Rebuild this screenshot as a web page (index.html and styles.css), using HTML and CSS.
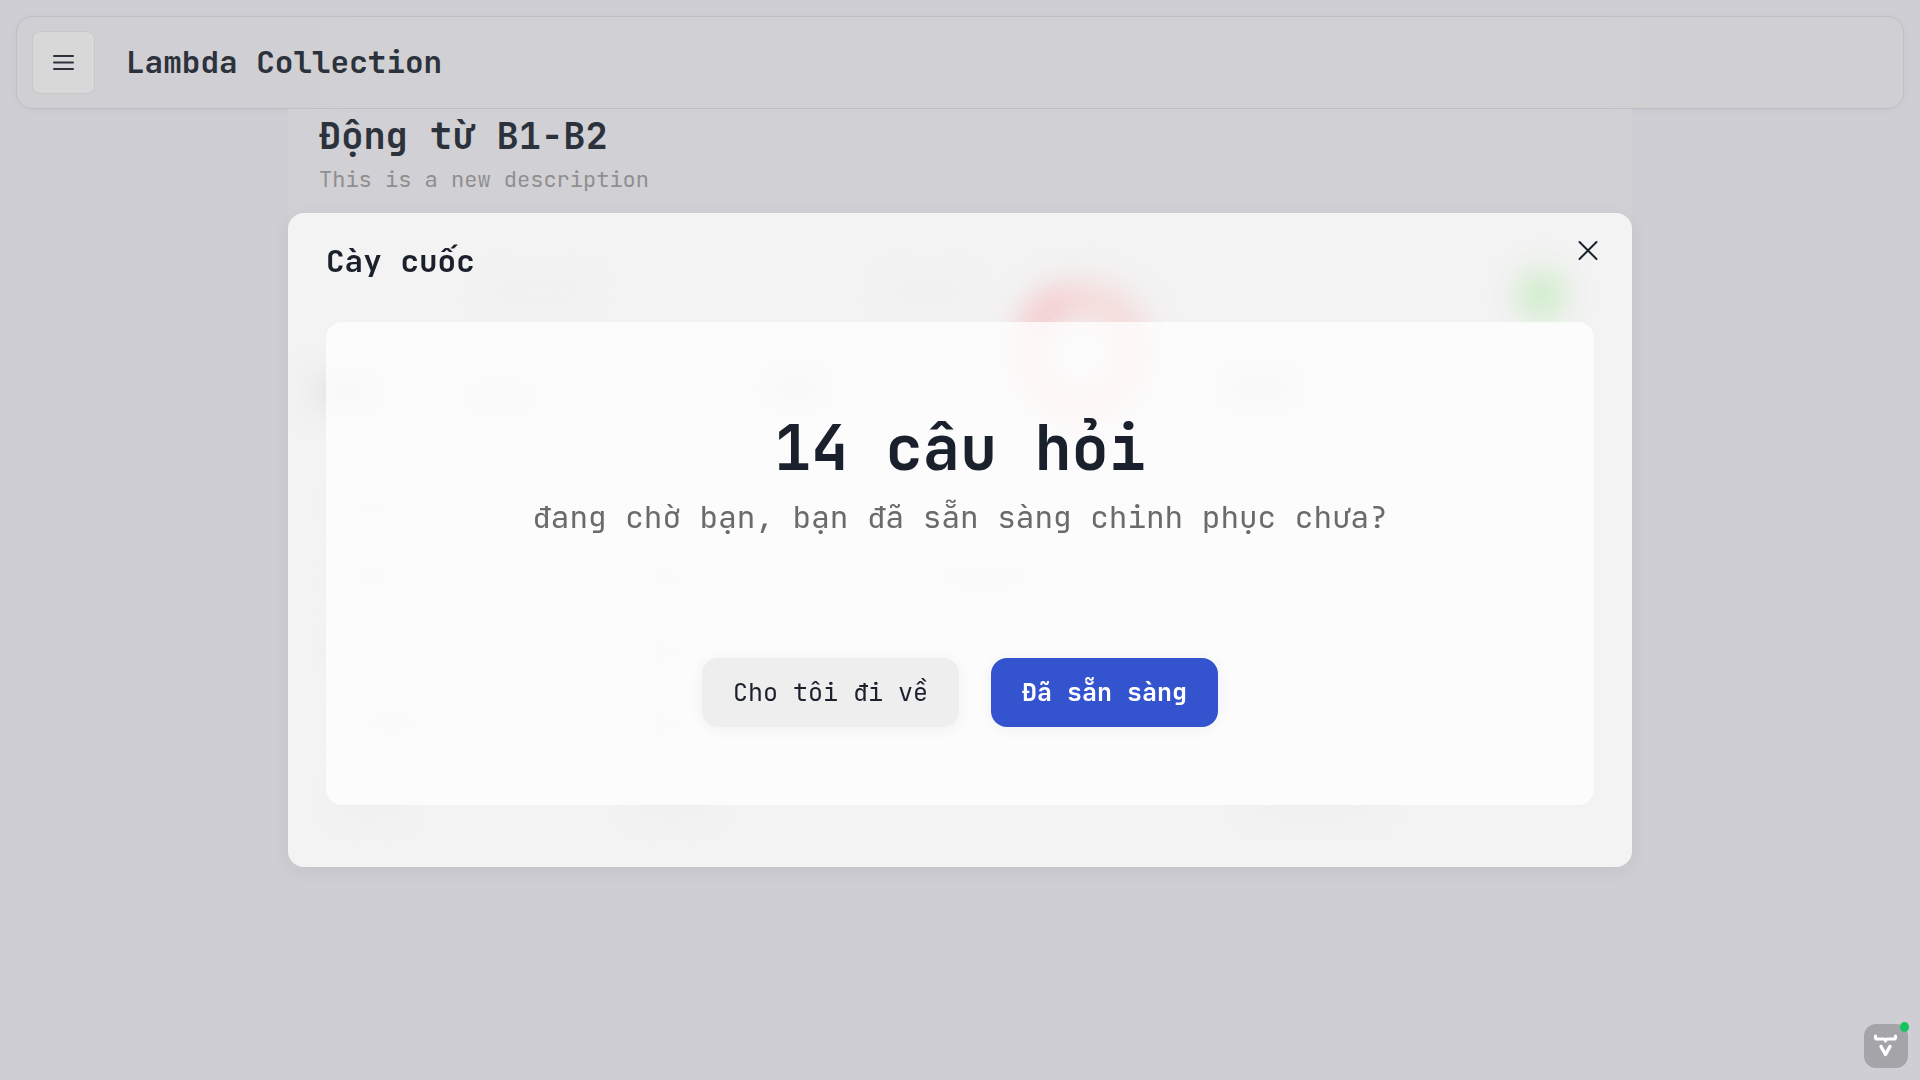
FILE: index.html
```html
<!DOCTYPE html>
<html lang="vi">
<head>
<meta charset="utf-8">
<meta name="viewport" content="width=device-width, initial-scale=1">
<title>Lambda Collection</title>
<link rel="stylesheet" href="styles.css">
</head>
<body>
<div class="page">
  <header class="topbar">
    <button class="menu-button" type="button" aria-label="Menu">
      <svg width="24" height="24" viewBox="0 0 24 24" fill="none" stroke="currentColor" stroke-width="2" stroke-linecap="round"><path d="M2 5h19M2 11.500h19M2 18h19"/></svg>
    </button>
    <span class="brand">Lambda Collection</span>
  </header>
  <main class="deck">
    <h1 class="deck-title">Động từ B1-B2</h1>
    <p class="deck-description">This is a new description</p>
  </main>
</div>

<div class="overlay">
  <section class="dialog" role="dialog" aria-modal="true" aria-labelledby="dialog-title">
    <svg class="glow" viewBox="0 0 1344 654" aria-hidden="true">
      <defs>
        <filter id="soft" x="-100%" y="-100%" width="300%" height="300%" color-interpolation-filters="sRGB"><feGaussianBlur stdDeviation="15"/></filter>
      </defs>
      <g filter="url(#soft)">
        <circle cx="793" cy="139" r="53" fill="none" stroke="#f5d8d8" stroke-width="34"/>
        <path d="M744 118A54 54 0 0 1 780 86" fill="none" stroke="#f4c8cb" stroke-width="32"/>
        <circle cx="1253" cy="82" r="25" fill="#cfecc9"/>
        <g fill="#e2e2e2">
          <rect x="28" y="162" width="64" height="34"/>
          <rect x="180" y="174" width="64" height="22"/>
          <rect x="476" y="156" width="62" height="36"/>
          <rect x="934" y="156" width="76" height="36"/>
        </g>
        <g fill="#e8e8e8">
          <rect x="56" y="286" width="60" height="16"/>
          <rect x="56" y="356" width="60" height="16"/>
          <rect x="350" y="356" width="56" height="16"/>
          <rect x="636" y="356" width="120" height="16"/>
          <rect x="52" y="430" width="36" height="16"/>
          <rect x="350" y="430" width="56" height="16"/>
          <rect x="62" y="502" width="80" height="16"/>
          <rect x="350" y="502" width="56" height="16"/>
        </g>
        <g fill="#ededed">
          <rect x="52" y="578" width="60" height="18"/>
          <rect x="350" y="578" width="70" height="18"/>
          <rect x="960" y="580" width="130" height="14"/>
          <rect x="200" y="72" width="100" height="10"/>
          <rect x="600" y="72" width="80" height="10"/>
        </g>
      </g>
    </svg>
    <header class="dialog-header">
      <h2 class="dialog-title" id="dialog-title">Cày cuốc</h2>
      <button class="close-button" type="button" aria-label="Đóng">
        <svg width="24" height="24" viewBox="0 0 24 24" fill="none" stroke="currentColor" stroke-width="2" stroke-linecap="round"><path d="M3.500 3l17 17M20.500 3l-17 17"/></svg>
      </button>
    </header>
    <div class="prompt">
      <p class="prompt-count">14 câu hỏi</p>
      <p class="prompt-text">đang chờ bạn, bạn đã sẵn sàng chinh phục chưa?</p>
      <div class="actions">
        <button class="button" type="button">Cho tôi đi về</button>
        <button class="button button-primary" type="button">Đã sẵn sàng</button>
      </div>
    </div>
  </section>
</div>

<button class="devtools" type="button" aria-label="Dev tools">
  <svg width="44" height="44" viewBox="0 0 44 44" fill="none" stroke="#fff" stroke-linecap="round" stroke-linejoin="round"><path stroke-width="3.200" d="M11.500 12v1.500q0 1.500 1.500 1.500h6.500q2 0 2 2 0-2 2-2H30q1.500 0 1.500-1.500V12"/><path stroke-width="3.400" d="M17 22.500l4.500 8 4.500-8"/></svg>
  <span class="status-dot"></span>
</button>
</body>
</html>
```

FILE: styles.css
```css
* {
  box-sizing: border-box;
}

body {
  margin: 0;
  min-height: 100vh;
  background: #cfced4;
  color: #1a202c;
  font-family: "JetBrains Mono", "DejaVu Sans Mono", monospace;
}

h1, h2, p {
  margin: 0;
}

button {
  border: 0;
  padding: 0;
  background: none;
  color: inherit;
  font: inherit;
  cursor: pointer;
}

svg {
  display: block;
}

.page {
  min-height: 100vh;
  padding-top: 16px;
  color: #2c323c;
}

.topbar {
  display: flex;
  align-items: center;
  gap: 31px;
  height: 93px;
  margin: 0 16px;
  padding: 0 15px;
  border: 1px solid #bfbfc1;
  border-radius: 16px;
  background: #d0cfd3;
  background: linear-gradient(90deg, #d0cfd3 14%, #d1d0d2 18%, #d1d0d2 84%, #d0cfd3 88%);
  box-shadow: 0 1px 8px rgba(0, 0, 0, 0.04);
}

.menu-button {
  display: grid;
  place-items: center;
  width: 63px;
  height: 63px;
  border: 1px solid #c8c8c8;
  border-radius: 8px;
  background: #d8d8d8;
}

.brand {
  padding-bottom: 2px;
  font-size: 31px;
  font-weight: 700;
  line-height: 40px;
}

.deck {
  width: 70%;
  min-height: 758px;
  margin: 0 auto;
  padding: 0 31px;
  background: #d1d0d4;
  background: linear-gradient(#d1d0d4 100px, #cfced4 700px);
}

.deck-title {
  padding-top: 3px;
  font-size: 37px;
  font-weight: 600;
  line-height: 48px;
}

.deck-description {
  color: #8f8f90;
  font-size: 22px;
  line-height: 40px;
}

.overlay {
  position: fixed;
  inset: 0;
  display: flex;
  align-items: center;
  justify-content: center;
}

.dialog {
  position: relative;
  width: 70%;
  padding: 26px 38px 62px;
  border-radius: 16px;
  background: #f3f3f3;
  box-shadow: 0 4px 20px rgba(0, 0, 0, 0.06);
}

.glow {
  position: absolute;
  inset: 0;
  width: 100%;
  height: 100%;
  border-radius: 16px;
  overflow: hidden;
  pointer-events: none;
}

.dialog-header {
  position: relative;
  display: flex;
  justify-content: space-between;
  align-items: flex-start;
  height: 83px;
}

.dialog-title {
  font-size: 31px;
  font-weight: 600;
  line-height: 44px;
}

.close-button {
  display: grid;
  place-items: center;
  width: 24px;
  height: 24px;
  margin-right: -6px;
}

.prompt {
  position: relative;
  padding: 86px 32px 78px;
  border-radius: 16px;
  background: rgba(255, 255, 255, 0.76);
  text-align: center;
}

.prompt-count {
  font-size: 62px;
  font-weight: 700;
  line-height: 80px;
}

.prompt-text {
  margin-top: 9px;
  color: #6b6b6b;
  font-size: 31px;
  line-height: 40px;
}

.actions {
  display: flex;
  justify-content: center;
  gap: 32px;
  margin-top: 121px;
}

.button {
  height: 69px;
  padding: 0 31px 2px;
  border-radius: 16px;
  background: #eeeeee;
  box-shadow: 0 2px 16px rgba(0, 0, 0, 0.05);
  font-size: 25px;
}

.button-primary {
  background: #3453cf;
  color: #ffffff;
  font-weight: 600;
}

.devtools {
  position: fixed;
  right: 12px;
  bottom: 12px;
  width: 44px;
  height: 44px;
  border-radius: 12px;
  background: #a5a4a9;
}

.status-dot {
  position: absolute;
  top: -2px;
  right: -1px;
  width: 9px;
  height: 10px;
  border-radius: 50%;
  background: #16c45e;
}
```
